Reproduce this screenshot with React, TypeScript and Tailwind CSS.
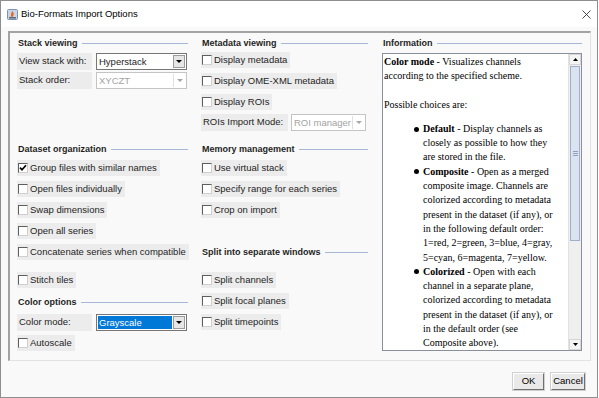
import React from "react";

function Header({ title }: { title: string }) {
  return (
    <div className="flex items-center h-[12px]">
      <span className="text-[9px] font-bold text-[#1f1f1f] leading-[12px] whitespace-nowrap pl-[1px]">{title}</span>
      <div className="flex-1 h-px bg-[#a7b7d8] ml-[4px]" />
    </div>
  );
}

function CheckRow({ label, checked = false, className = "" }: { label: string; checked?: boolean; className?: string }) {
  return (
    <div className={"flex " + className}>
      <div className="flex items-center h-[16px] bg-[#ececec] pl-[1px] pr-[3px] gap-[2px]">
        <span className="w-[10px] h-[10px] bg-white border border-t-[#5e5e5e] border-l-[#5e5e5e] border-b-[#cfcfcf] border-r-[#cfcfcf] flex items-center justify-center">
          {checked && (
            <svg width="8" height="8" viewBox="0 0 8 8">
              <path d="M1 3.6 L3 5.8 L7 1.2" stroke="#000" strokeWidth="1.7" fill="none" />
            </svg>
          )}
        </span>
        <span className="text-[9.5px] text-[#1e1e1e] leading-none whitespace-nowrap">{label}</span>
      </div>
    </div>
  );
}

function Label({ text, w }: { text: string; w: string }) {
  return (
    <div className={`${w} h-[17px] bg-[#ececec] flex items-center pl-[2px] text-[9.5px] text-[#1e1e1e] whitespace-nowrap`}>
      {text}
    </div>
  );
}

function Combo({ value, w, disabled = false, selected = false }: { value: string; w: string; disabled?: boolean; selected?: boolean }) {
  return (
    <div className={`${w} h-[17px] flex bg-white border ${disabled ? "border-[#c4c4c4]" : "border-[#767676]"}`}>
      <div className="flex-1 p-[1px] flex">
        <div
          className={`flex-1 flex items-center pl-[1px] text-[9.5px] leading-none whitespace-nowrap ${
            selected ? "bg-[#0078d7] text-white" : disabled ? "text-[#a3a3a3]" : "text-[#1e1e1e]"
          }`}
        >
          {value}
        </div>
      </div>
      <div
        className={`w-[12px] my-[1px] mr-[1px] flex items-center justify-center ${
          disabled ? "bg-white border-l border-[#e0e0e0]" : "bg-[#e6e6e6] border border-[#9b9b9b]"
        }`}
      >
        <svg width="6" height="3" viewBox="0 0 6 3">
          <path d="M0 0H6L3 3Z" fill={disabled ? "#a6a6a6" : "#000"} />
        </svg>
      </div>
    </div>
  );
}

function Bullet({ head, lines }: { head: string; lines: string[] }) {
  return (
    <div className="flex ml-[29px]">
      <div className="w-[10px] h-[14.3px] flex items-center pl-[1px] shrink-0">
        <span className="w-[5px] h-[5px] rounded-full bg-black" />
      </div>
      <div>
        {lines.map((l, i) => (
          <div key={i} className="h-[14.3px]">
            {i === 0 ? (
              <>
                <b>{head}</b>
                {l}
              </>
            ) : (
              l
            )}
          </div>
        ))}
      </div>
    </div>
  );
}

function Button({ text, w }: { text: string; w: string }) {
  return (
    <div
      className={`${w} h-[17px] bg-[#e9e9e9] border border-t-white border-l-white border-b-[#6f6f6f] border-r-[#6f6f6f] shadow-[0_0_0_1px_#d0d0d0] flex items-center justify-center text-[9.5px] text-black`}
    >
      {text}
    </div>
  );
}

export default function App() {
  return (
    <div className="w-[599px] h-[398px] bg-white font-['Liberation_Sans',Arial,sans-serif] overflow-hidden">
      <div className="w-[598px] h-[398px] border border-[#8e8e8e] bg-[#f9f9f9] flex flex-col">
        {/* Title bar */}
        <div className="h-[26px] bg-white flex items-center shrink-0">
          <svg className="ml-[6px]" width="11" height="11" viewBox="0 0 11 11">
            <rect x="0.5" y="0.5" width="10" height="10" rx="1" fill="#c7d5e8" stroke="#7d93b3" />
            <path d="M5.2 1.8 L6.8 4.8 L6 7.8 L3.8 7.8 L4.2 4.6Z" fill="#e8651c" />
            <rect x="2" y="8" width="7" height="1.6" fill="#5f6b7a" />
          </svg>
          <span className="ml-[3px] text-[9.5px] text-black whitespace-nowrap">Bio-Formats Import Options</span>
          <div className="flex-1" />
          <svg className="mr-[6px]" width="9" height="9" viewBox="0 0 9 9">
            <path d="M0.5 0.5 L8.5 8.5 M8.5 0.5 L0.5 8.5" stroke="#333" strokeWidth="0.9" />
          </svg>
        </div>

        {/* Body */}
        <div className="flex-1 flex flex-col pl-[7px] pt-[4px]">
          <div className="w-[583px] h-[330px] border-t-2 border-l-2 border-t-[#a3a3a3] border-l-[#a3a3a3] border-b border-r border-b-[#e2e2e2] border-r-[#e2e2e2] flex">
            {/* Column 1 */}
            <div className="w-[171px] ml-[7px] flex flex-col">
              <div className="mt-[4px]">
                <Header title="Stack viewing" />
              </div>
              <div className="mt-[4px] flex gap-[4px]">
                <Label text="View stack with:" w="w-[75px]" />
                <Combo value="Hyperstack" w="w-[91px]" />
              </div>
              <div className="mt-[2px] flex gap-[4px]">
                <Label text="Stack order:" w="w-[75px]" />
                <Combo value="XYCZT" w="w-[91px]" disabled />
              </div>
              <div className="mt-[54px]">
                <Header title="Dataset organization" />
              </div>
              <CheckRow className="mt-[5px]" label="Group files with similar names" checked />
              <CheckRow className="mt-[5px]" label="Open files individually" />
              <CheckRow className="mt-[5px]" label="Swap dimensions" />
              <CheckRow className="mt-[5px]" label="Open all series" />
              <CheckRow className="mt-[5px]" label="Concatenate series when compatible" />
              <CheckRow className="mt-[12px]" label="Stitch tiles" />
              <div className="mt-[8px]">
                <Header title="Color options" />
              </div>
              <div className="mt-[6px] flex gap-[4px]">
                <Label text="Color mode:" w="w-[75px]" />
                <Combo value="Grayscale" w="w-[91px]" selected />
              </div>
              <CheckRow className="mt-[4px]" label="Autoscale" />
            </div>

            {/* Column 2 */}
            <div className="w-[167px] ml-[13px] flex flex-col">
              <div className="mt-[4px]">
                <Header title="Metadata viewing" />
              </div>
              <CheckRow className="mt-[3px]" label="Display metadata" />
              <CheckRow className="mt-[5px]" label="Display OME-XML metadata" />
              <CheckRow className="mt-[5px]" label="Display ROIs" />
              <div className="mt-[4px] flex gap-[3px]">
                <Label text="ROIs Import Mode:" w="w-[87px]" />
                <Combo value="ROI manager" w="w-[75px]" disabled />
              </div>
              <div className="mt-[12px]">
                <Header title="Memory management" />
              </div>
              <CheckRow className="mt-[5px]" label="Use virtual stack" />
              <CheckRow className="mt-[5px]" label="Specify range for each series" />
              <CheckRow className="mt-[5px]" label="Crop on import" />
              <div className="mt-[28px]">
                <Header title="Split into separate windows" />
              </div>
              <CheckRow className="mt-[14px]" label="Split channels" />
              <CheckRow className="mt-[5px]" label="Split focal planes" />
              <CheckRow className="mt-[5px]" label="Split timepoints" />
            </div>

            {/* Column 3 */}
            <div className="w-[200px] ml-[14px] flex flex-col">
              <div className="mt-[4px]">
                <Header title="Information" />
              </div>
              <div className="mt-[4px] h-[298px] border border-[#8a8f99] bg-white flex">
                <div className="flex-1 overflow-hidden pl-[1px] pt-[1px] whitespace-nowrap font-['Liberation_Serif','Times_New_Roman',serif] text-[10px] leading-[14.3px] text-black">
                  <div className="h-[14.3px]">
                    <b>Color mode</b> - Visualizes channels
                  </div>
                  <div className="h-[14.3px]">according to the specified scheme.</div>
                  <div className="h-[14.3px] mt-[14.3px]">Possible choices are:</div>
                  <div className="mt-[9.7px] flex flex-col">
                    <Bullet
                      head="Default"
                      lines={[" - Display channels as", "closely as possible to how they", "are stored in the file."]}
                    />
                    <Bullet
                      head="Composite"
                      lines={[
                        " - Open as a merged",
                        "composite image. Channels are",
                        "colorized according to metadata",
                        "present in the dataset (if any), or",
                        "in the following default order:",
                        "1=red, 2=green, 3=blue, 4=gray,",
                        "5=cyan, 6=magenta, 7=yellow.",
                      ]}
                    />
                    <Bullet
                      head="Colorized"
                      lines={[
                        " - Open with each",
                        "channel in a separate plane,",
                        "colorized according to metadata",
                        "present in the dataset (if any), or",
                        "in the default order (see",
                        "Composite above).",
                      ]}
                    />
                  </div>
                </div>
                {/* Scrollbar */}
                <div className="w-[13px] bg-[#efefef] border-l border-[#e2e2e2] flex flex-col">
                  <div className="h-[11px] bg-[#f4f4f4] border border-[#d6d6d6] flex items-center justify-center">
                    <svg width="5" height="3" viewBox="0 0 5 3">
                      <path d="M0 3H5L2.5 0Z" fill="#000" />
                    </svg>
                  </div>
                  <div className="mt-[1px] mx-[1px] h-[175px] bg-[#dbe3f1] border border-[#9eaecb] flex flex-col items-center justify-center gap-[1px]">
                    <span className="w-[5px] h-px bg-[#8e9fbf]" />
                    <span className="w-[5px] h-px bg-[#8e9fbf]" />
                    <span className="w-[5px] h-px bg-[#8e9fbf]" />
                  </div>
                  <div className="flex-1" />
                  <div className="h-[11px] bg-[#f4f4f4] border border-[#d6d6d6] flex items-center justify-center">
                    <svg width="5" height="3" viewBox="0 0 5 3">
                      <path d="M0 0H5L2.5 3Z" fill="#000" />
                    </svg>
                  </div>
                </div>
              </div>
            </div>
          </div>

          {/* Buttons */}
          <div className="flex justify-end gap-[7px] mt-[12px] pr-[12px]">
            <Button text="OK" w="w-[31px]" />
            <Button text="Cancel" w="w-[34px]" />
          </div>
        </div>
      </div>
    </div>
  );
}
